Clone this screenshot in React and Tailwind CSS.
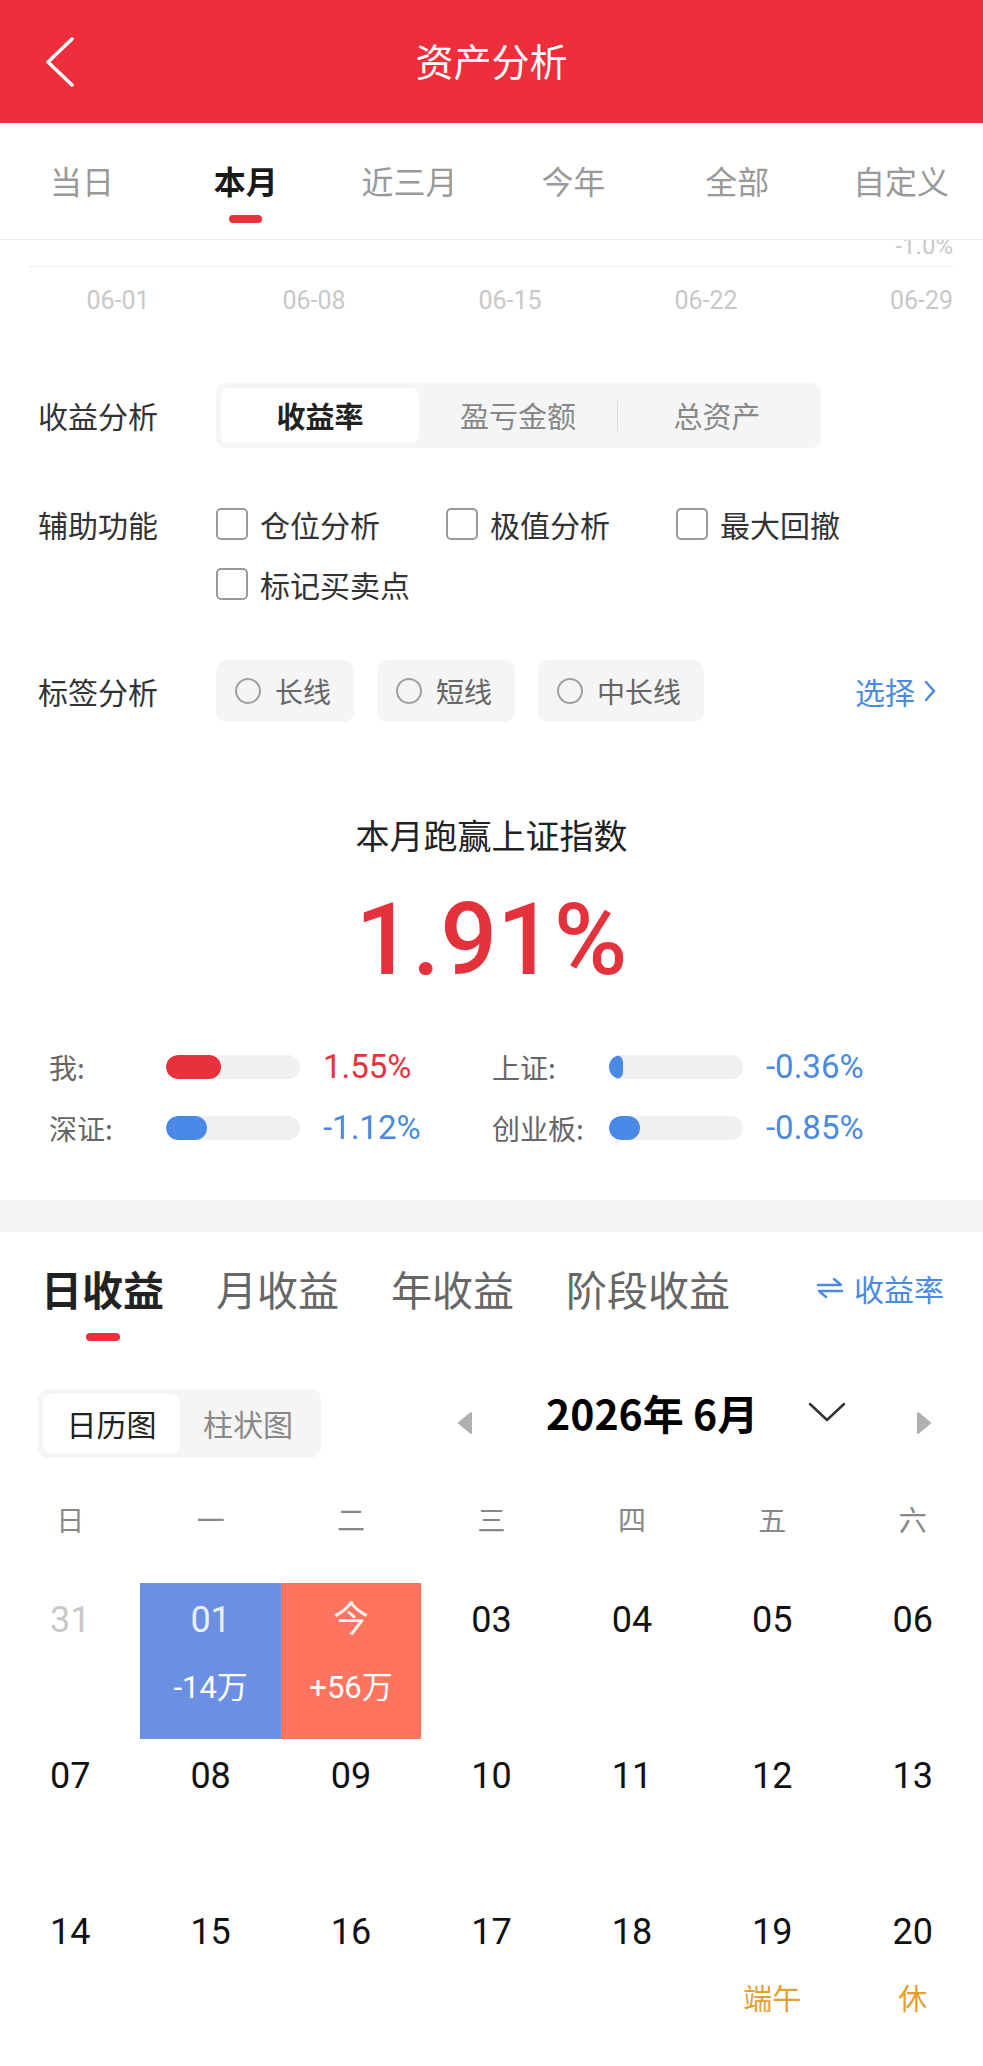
import React from "react";

const tabs = ["当日", "本月", "近三月", "今年", "全部", "自定义"];

const stats = [
  { label: "我:", w: 55, fill: "bg-[#e5323b]", v: "1.55%", vc: "text-[#e5323b]" },
  { label: "上证:", w: 14, fill: "bg-[#4a8ae6]", v: "-0.36%", vc: "text-[#4a8ae0]" },
  { label: "深证:", w: 41, fill: "bg-[#4a8ae6]", v: "-1.12%", vc: "text-[#4a8ae0]" },
  { label: "创业板:", w: 31, fill: "bg-[#4a8ae6]", v: "-0.85%", vc: "text-[#4a8ae0]" },
];

const week = ["日", "一", "二", "三", "四", "五", "六"];

const cells = [
  { d: "31", color: "text-[#c8c8c8]" },
  { d: "01", color: "text-white/85", bg: "bg-[#6b8fe2]", sub: "-14万" },
  { d: "今", color: "text-white/90", bg: "bg-[#ff735f]", sub: "+56万" },
  { d: "03" },
  { d: "04" },
  { d: "05" },
  { d: "06" },
  { d: "07" },
  { d: "08" },
  { d: "09" },
  { d: "10" },
  { d: "11" },
  { d: "12" },
  { d: "13" },
  { d: "14" },
  { d: "15" },
  { d: "16" },
  { d: "17" },
  { d: "18" },
  { d: "19", holiday: "端午" },
  { d: "20", holiday: "休" },
];

function Triangle({ dir, className }) {
  return (
    <svg className={className} width="18" height="24" viewBox="0 0 18 24">
      {dir === "left" ? (
        <path d="M15 2 L3 12 L15 22 Z" fill="#b0b0b0" stroke="#b0b0b0" strokeWidth="2" strokeLinejoin="round" />
      ) : (
        <path d="M3 2 L15 12 L3 22 Z" fill="#b0b0b0" stroke="#b0b0b0" strokeWidth="2" strokeLinejoin="round" />
      )}
    </svg>
  );
}

export default function App() {
  return (
    <div className="w-[983px] min-h-[2066px] bg-white font-['Noto_Sans_CJK_SC',sans-serif] text-[#222]">
      {/* Header */}
      <div className="h-[123px] bg-[#ee2f3b] grid grid-cols-[1fr_auto_1fr] items-center">
        <div className="pl-[44px] flex items-center">
          <svg width="32" height="50" viewBox="0 0 32 50">
            <polyline points="28,2 4,25 28,48" fill="none" stroke="white" strokeWidth="3.5" strokeLinecap="round" strokeLinejoin="round" />
          </svg>
        </div>
        <div className="text-white text-[38px] leading-[50px] pb-[4px]">资产分析</div>
        <div />
      </div>

      {/* Period tabs */}
      <div className="h-[117px] border-b border-[#ececec] flex">
        {tabs.map((t, i) => (
          <div key={t} className="flex-1 flex flex-col items-center pt-[35px]">
            <div className={i === 1 ? "text-[32px] leading-[44px] font-bold text-[#1a1a1a]" : "text-[32px] leading-[44px] text-[#999]"}>{t}</div>
            {i === 1 && <div className="mt-[13px] w-[33px] h-[8px] rounded-full bg-[#e8313b]" />}
          </div>
        ))}
      </div>

      {/* Chart remnant */}
      <div className="h-[16px] overflow-hidden flex justify-end pr-[30px]">
        <div className="font-['Roboto',sans-serif] text-[24px] leading-[24px] -mt-[6px] text-[#c8c8c8]">-1.0%</div>
      </div>
      <div className="mt-[10px] ml-[28px] mr-[30px] h-px bg-[#eeeeee]" />
      <div className="mt-[19px] flex text-[25px] leading-[30px] text-[#c8c8c8] font-['Roboto',sans-serif]">
        <div className="w-[20px]" />
        {["06-01", "06-08", "06-15", "06-22"].map((d) => (
          <div key={d} className="w-[196px] text-center">{d}</div>
        ))}
        <div className="flex-1 text-right pr-[30px]">06-29</div>
      </div>

      {/* 收益分析 */}
      <div className="mt-[67px] flex items-center">
        <div className="w-[216px] pl-[38px] text-[30px] text-[#333]">收益分析</div>
        <div className="w-[605px] h-[65px] bg-[#f5f5f5] rounded-[10px] p-[5px] flex items-center">
          <div className="flex-1 h-full bg-white rounded-[8px] flex items-center justify-center text-[29px] font-bold text-[#222]">收益率</div>
          <div className="flex-1 text-center text-[29px] text-[#888]">盈亏金额</div>
          <div className="w-px h-[30px] bg-[#dddddd]" />
          <div className="flex-1 text-center text-[29px] text-[#888]">总资产</div>
        </div>
      </div>

      {/* 辅助功能 */}
      <div className="mt-[54px] flex items-start">
        <div className="w-[216px] shrink-0 pl-[38px] text-[30px] leading-[44px] text-[#333]">辅助功能</div>
        <div className="flex-1 flex flex-wrap gap-y-[16px]">
          {["仓位分析", "极值分析", "最大回撤", "标记买卖点"].map((t) => (
            <div key={t} className="w-[230px] h-[44px] flex items-center gap-[12px]">
              <div className="w-[32px] h-[32px] rounded-[5px] border-2 border-[#9a9a9a]" />
              <span className="text-[30px] text-[#333]">{t}</span>
            </div>
          ))}
        </div>
      </div>

      {/* 标签分析 */}
      <div className="mt-[54px] flex items-center">
        <div className="w-[216px] shrink-0 pl-[38px] text-[30px] text-[#333]">标签分析</div>
        <div className="flex gap-[23px]">
          {["长线", "短线", "中长线"].map((t) => (
            <div key={t} className="h-[62px] pl-[19px] pr-[23px] bg-[#f5f5f5] rounded-[10px] flex items-center gap-[14px]">
              <div className="w-[26px] h-[26px] rounded-full border-2 border-[#a0a0a0]" />
              <span className="text-[28px] text-[#666]">{t}</span>
            </div>
          ))}
        </div>
        <div className="ml-auto pr-[46px] flex items-center gap-[8px] text-[30px] text-[#4a8ae0]">
          选择
          <svg width="14" height="24" viewBox="0 0 14 24">
            <polyline points="3,3 11,12 3,21" fill="none" stroke="#4a8ae0" strokeWidth="2.5" strokeLinecap="round" strokeLinejoin="round" />
          </svg>
        </div>
      </div>

      {/* 跑赢 */}
      <div className="mt-[89px] text-center text-[34px] leading-[48px] text-[#222]">本月跑赢上证指数</div>
      <div className="mt-[31px] text-center font-['Roboto',sans-serif] font-medium text-[100px] leading-[100px] text-[#e3323b]">1.91%</div>

      {/* Stats */}
      <div className="mt-[57px] pl-[49px] grid grid-cols-[443px_443px] gap-y-[21px]">
        {stats.map((s) => (
          <div key={s.label} className="h-[40px] flex items-center">
            <div className="w-[117px] text-[28px] text-[#666]">{s.label}</div>
            <div className="w-[134px] h-[24px] rounded-full bg-[#f0f0f0] overflow-hidden">
              <div className={`h-full rounded-full ${s.fill}`} style={{ width: s.w }} />
            </div>
            <div className={`ml-[23px] font-['Roboto',sans-serif] text-[33px] ${s.vc}`}>{s.v}</div>
          </div>
        ))}
      </div>

      {/* Separator */}
      <div className="mt-[52px] h-[32px] bg-[#f2f3f5]" />

      {/* 收益 tabs */}
      <div className="mt-[28px] flex items-start pl-[41px]">
        <div className="flex flex-col items-center">
          <div className="text-[41px] leading-[56px] font-bold text-[#222]">日收益</div>
          <div className="mt-[17px] w-[34px] h-[8px] rounded-full bg-[#e8313b]" />
        </div>
        <div className="ml-[52px] text-[41px] leading-[56px] text-[#666]">月收益</div>
        <div className="ml-[52px] text-[41px] leading-[56px] text-[#666]">年收益</div>
        <div className="ml-[52px] text-[41px] leading-[56px] text-[#666]">阶段收益</div>
        <div className="ml-auto pr-[39px] h-[56px] flex items-center gap-[10px] text-[30px] text-[#4a8ae0]">
          <svg width="28" height="24" viewBox="0 0 28 24">
            <path d="M2 9 H25 L18 3" fill="none" stroke="#4a8ae0" strokeWidth="2.5" strokeLinecap="round" strokeLinejoin="round" />
            <path d="M26 15 H3 L10 21" fill="none" stroke="#4a8ae0" strokeWidth="2.5" strokeLinecap="round" strokeLinejoin="round" />
          </svg>
          收益率
        </div>
      </div>

      {/* Calendar controls */}
      <div className="mt-[46px] flex items-center">
        <div className="ml-[38px] w-[283px] h-[69px] bg-[#f5f5f5] rounded-[10px] p-[5px] flex">
          <div className="w-[137px] bg-white rounded-[8px] flex items-center justify-center text-[30px] text-[#222]">日历图</div>
          <div className="flex-1 flex items-center justify-center text-[30px] text-[#888]">柱状图</div>
        </div>
        <Triangle dir="left" className="ml-[135px]" />
        <div className="ml-[72px] mb-[22px] text-[41px] leading-[50px] font-bold text-black">2026年 6月</div>
        <svg className="ml-[50px] mb-[22px]" width="38" height="20" viewBox="0 0 38 20">
          <polyline points="2,2 19,18 36,2" fill="none" stroke="#333" strokeWidth="2.5" strokeLinecap="round" strokeLinejoin="round" />
        </svg>
        <Triangle dir="right" className="ml-[69px]" />
      </div>

      {/* Week header */}
      <div className="mt-[30px] grid grid-cols-7 h-[60px] items-center text-center text-[28px] text-[#888]">
        {week.map((w) => (
          <div key={w}>{w}</div>
        ))}
      </div>

      {/* Calendar */}
      <div className="mt-[34px] grid grid-cols-7">
        {cells.map((c) => (
          <div key={c.d} className={`h-[156px] flex flex-col items-center pt-[15px] ${c.bg || ""}`}>
            <div className={`font-['Roboto','Noto_Sans_CJK_SC',sans-serif] text-[36px] leading-[44px] ${c.color || "text-[#111]"}`}>{c.d}</div>
            {c.sub && <div className="mt-[28px] font-['Roboto','Noto_Sans_CJK_SC',sans-serif] text-[31px] leading-[36px] text-white">{c.sub}</div>}
            {c.holiday && <div className="mt-[25px] text-[29px] leading-[36px] text-[#e3a030]">{c.holiday}</div>}
          </div>
        ))}
      </div>
    </div>
  );
}
